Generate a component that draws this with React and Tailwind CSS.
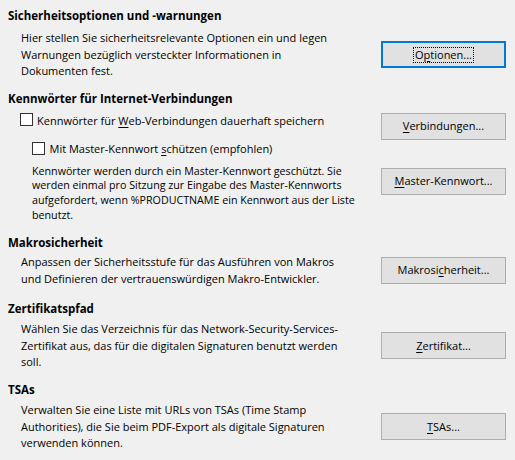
// Sicherheit options page – LibreOffice style dialog panel

const Heading = ({ children, className = '' }) => (
  <div className={`h-[16px] leading-[16px] text-[11.5px] font-bold whitespace-nowrap ${className}`}>
    {children}
  </div>
);

const Lines = ({ lines, className = '' }) => (
  <div className={className}>
    {lines.map((l, i) => (
      <div key={i} className="whitespace-nowrap">{l}</div>
    ))}
  </div>
);

const Button = ({ children, focused = false, className = '' }) => (
  <button
    className={`w-[125px] h-[27px] shrink-0 flex items-center justify-center bg-[#e1e1e1] text-[11px] text-black ${
      focused ? 'border-2 border-[#0078d7]' : 'border border-[#adadad]'
    } ${className}`}
  >
    {focused ? (
      <span className="border border-dotted border-black px-[1px] leading-[14px]">{children}</span>
    ) : (
      children
    )}
  </button>
);

const Checkbox = () => (
  <span className="w-[13px] h-[13px] shrink-0 border border-[#333333] bg-white mt-[0.5px]" />
);

const U = ({ children }) => <span className="underline underline-offset-[2px]">{children}</span>;

export default function App() {
  return (
    <div className="bg-[#f0f0f0] w-[515px] h-[460px] overflow-hidden pt-[8px] pl-[8px] pr-[9px] text-[11px] text-black font-['Open_Sans',sans-serif]">
      {/* Sicherheitsoptionen */}
      <Heading>Sicherheitsoptionen und -warnungen</Heading>
      <div className="flex items-center mt-[6px]">
        <Lines
          className="flex-1 pl-[13px] leading-[16.5px]"
          lines={[
            'Hier stellen Sie sicherheitsrelevante Optionen ein und legen',
            'Warnungen bezüglich versteckter Informationen in',
            'Dokumenten fest.',
          ]}
        />
        <Button focused>O<U>p</U>tionen...</Button>
      </div>

      {/* Kennwörter */}
      <Heading className="mt-[11px]">Kennwörter für Internet-Verbindungen</Heading>
      <div className="flex items-start mt-[6px]">
        <div className="flex-1 pl-[12px]">
          <div className="flex items-start gap-[4px] leading-[16.5px]">
            <Checkbox />
            <span className="whitespace-nowrap">Kennwörter für <U>W</U>eb-Verbindungen dauerhaft speichern</span>
          </div>
          <div className="pl-[12px] mt-[12px]">
            <div className="flex items-start gap-[4.5px] leading-[16.5px]">
              <Checkbox />
              <span className="whitespace-nowrap">Mit Master-Kennwort <U>s</U>chützen (empfohlen)</span>
            </div>
            <Lines
              className="mt-[6px] text-[10.7px] leading-[14.8px]"
              lines={[
                'Kennwörter werden durch ein Master-Kennwort geschützt. Sie',
                'werden einmal pro Sitzung zur Eingabe des Master-Kennworts',
                'aufgefordert, wenn %PRODUCTNAME ein Kennwort aus der Liste',
                'benutzt.',
              ]}
            />
          </div>
        </div>
        <div className="flex flex-col">
          <Button className="mt-[0.5px]"><U>V</U>erbindungen...</Button>
          <Button className="mt-[28px]"><U>M</U>aster-Kennwort...</Button>
        </div>
      </div>

      {/* Makrosicherheit */}
      <Heading className="mt-[12px]">Makrosicherheit</Heading>
      <div className="flex items-center mt-[3.5px]">
        <Lines
          className="flex-1 pl-[13px] leading-[16.5px]"
          lines={[
            'Anpassen der Sicherheitsstufe für das Ausführen von Makros',
            'und Definieren der vertrauenswürdigen Makro-Entwickler.',
          ]}
        />
        <Button>Makrosi<U>c</U>herheit...</Button>
      </div>

      {/* Zertifikatspfad */}
      <Heading className="mt-[13.5px]">Zertifikatspfad</Heading>
      <div className="flex items-center mt-[4.5px]">
        <Lines
          className="flex-1 pl-[13px] leading-[16.5px]"
          lines={[
            'Wählen Sie das Verzeichnis für das Network-Security-Services-',
            'Zertifikat aus, das für die digitalen Signaturen benutzt werden',
            'soll.',
          ]}
        />
        <Button><U>Z</U>ertifikat...</Button>
      </div>

      {/* TSAs */}
      <Heading className="mt-[11.5px]">TSAs</Heading>
      <div className="flex items-center mt-[4px]">
        <Lines
          className="flex-1 pl-[13px] leading-[16.5px]"
          lines={[
            'Verwalten Sie eine Liste mit URLs von TSAs (Time Stamp',
            'Authorities), die Sie beim PDF-Export als digitale Signaturen',
            'verwenden können.',
          ]}
        />
        <Button><U>T</U>SAs...</Button>
      </div>
    </div>
  );
}
